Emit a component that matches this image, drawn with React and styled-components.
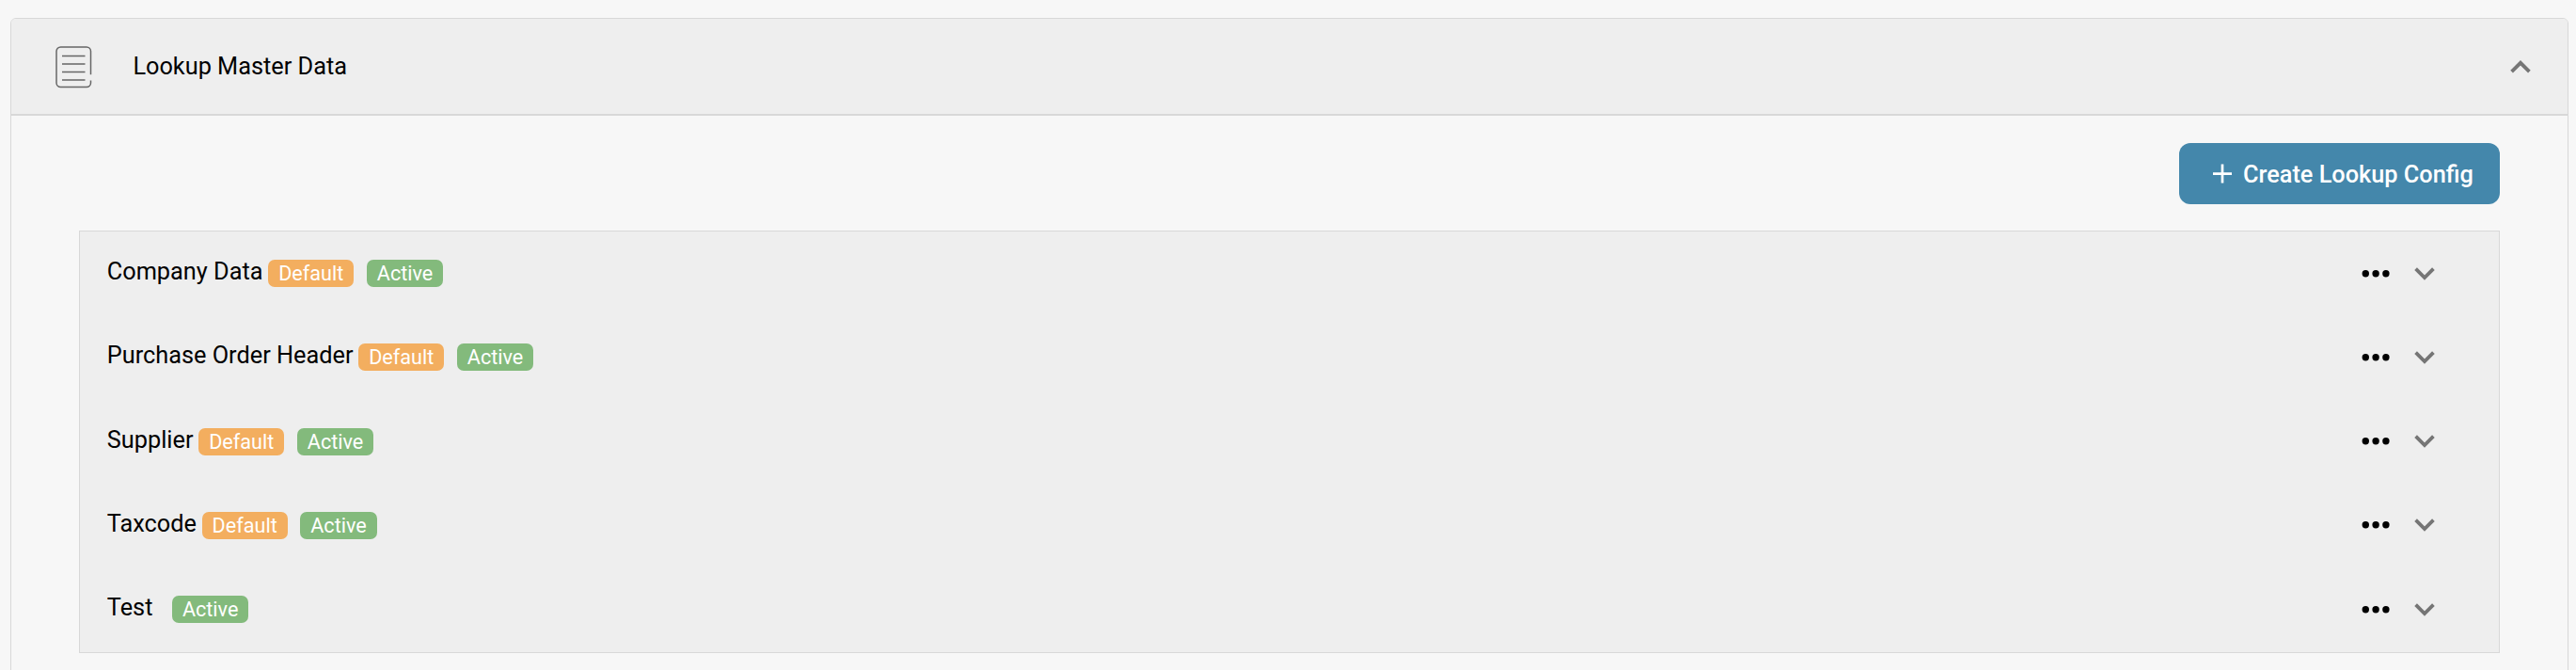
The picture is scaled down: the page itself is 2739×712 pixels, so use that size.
import React from 'react';
import styled, { createGlobalStyle } from 'styled-components';

const GlobalStyle = createGlobalStyle`
  * { box-sizing: border-box; }
  body {
    margin: 0;
    background: #f7f7f7;
    color: #000;
    font-family: Roboto, "Liberation Sans", sans-serif;
    font-size: 25.3px;
    line-height: 30px;
  }
`;

const Page = styled.main`
  height: 712px;
  padding: 19px 8px 0 11px;
  overflow: hidden;
`;

const Panel = styled.section`
  height: 760px;
  border: 1px solid #d8d8d8;
  border-radius: 6px;
  overflow: hidden;
`;

const PanelHeader = styled.header`
  display: flex;
  align-items: center;
  height: 103px;
  padding: 0 39.5px 0 47px;
  background: #eee;
  border-bottom: 2px solid #d8d8d8;
`;

const PanelTitle = styled.h2`
  flex: 1;
  margin: 0 0 0 42.4px;
  font-size: inherit;
  font-weight: 400;
`;

const PanelBody = styled.div`
  display: flex;
  flex-direction: column;
  align-items: flex-end;
  padding: 29px 72px 0 72px;
`;

const CreateButton = styled.button`
  display: flex;
  align-items: center;
  gap: 11px;
  width: 341px;
  height: 65px;
  padding: 0 0 0 35px;
  border: 0;
  border-radius: 12px;
  background: #4487ab;
  color: #fff;
  font: 500 25.3px/30px Roboto, "Liberation Sans", sans-serif;
  white-space: nowrap;
`;

const ButtonLabel = styled.span`
  padding-top: 2px;
`;

const List = styled.ul`
  width: 100%;
  height: 449px;
  margin: 28px 0 0;
  padding: 0 0 0.6px;
  display: grid;
  grid-template-rows: repeat(5, 1fr);
  list-style: none;
  background: #eee;
  border: 1px solid #d8d8d8;
`;

const Row = styled.li`
  display: flex;
  align-items: center;
  padding: 0 68px 0 28.8px;
`;

const Name = styled.span`
  padding-bottom: 3.3px;
  margin-right: 5.8px;
  white-space: nowrap;
`;

const Badge = styled.span`
  height: 29px;
  padding: 0 10.9px;
  border-radius: 7px;
  font-size: 21.6px;
  line-height: 29px;
  color: #fff;
  background: ${({ $tone }) => ($tone === 'default' ? '#f3ae5f' : '#83ba7c')};
  margin-left: ${({ $offset }) => $offset || 0}px;
`;

const Actions = styled.div`
  display: flex;
  align-items: center;
  gap: 26px;
  margin-left: auto;
`;

const Icon = styled.svg`
  display: block;
  flex: none;
  fill: none;
`;

const DocumentIcon = () => (
  <Icon width="40" height="46" viewBox="0 0 40 46" stroke="#666" strokeWidth="1.5">
    <path d="M37.5 31.2V6.5A4.5 4.5 0 0 0 33 2H5.5A4.5 4.5 0 0 0 1 6.5V40a4.5 4.5 0 0 0 4.5 4.5H33a4.5 4.5 0 0 0 4.5-4.5v-2.6" />
    <path d="M7 11.5h24.5M7 20h24.5M7 28.5h24.5M7 37h24.5" />
  </Icon>
);

const Chevron = ({ up }) => (
  <Icon width="22" height="14" viewBox="0 0 22 14" stroke="#757575" strokeWidth="3.8">
    <path d={up ? 'M1.6 12.2 11 2.8 20.4 12.2' : 'M1.6 1.6 11 11 20.4 1.6'} />
  </Icon>
);

const Plus = () => (
  <Icon width="22" height="22" viewBox="0 0 22 22" stroke="#fff" strokeWidth="2.7">
    <path d="M11 .6v20M1 10.6h20" />
  </Icon>
);

const Dots = () => (
  <Icon width="30" height="8" viewBox="0 0 30 8">
    {[4.3, 15.1, 25.9].map((x) => <circle key={x} cx={x} cy="3.8" r="3.7" fill="#000" />)}
  </Icon>
);

const configs = [
  { name: 'Company Data', isDefault: true },
  { name: 'Purchase Order Header', isDefault: true },
  { name: 'Supplier', isDefault: true },
  { name: 'Taxcode', isDefault: true },
  { name: 'Test', isDefault: false },
];

export default function App() {
  return (
    <Page>
      <GlobalStyle />
      <Panel>
        <PanelHeader>
          <DocumentIcon />
          <PanelTitle>Lookup Master Data</PanelTitle>
          <Chevron up />
        </PanelHeader>
        <PanelBody>
          <CreateButton>
            <Plus />
            <ButtonLabel>Create Lookup Config</ButtonLabel>
          </CreateButton>
          <List>
            {configs.map(({ name, isDefault }) => (
              <Row key={name}>
                <Name>{name}</Name>
                {isDefault && <Badge $tone="default">Default</Badge>}
                <Badge $tone="active" $offset={isDefault ? 13.8 : 14.8}>Active</Badge>
                <Actions>
                  <Dots />
                  <Chevron />
                </Actions>
              </Row>
            ))}
          </List>
        </PanelBody>
      </Panel>
    </Page>
  );
}
